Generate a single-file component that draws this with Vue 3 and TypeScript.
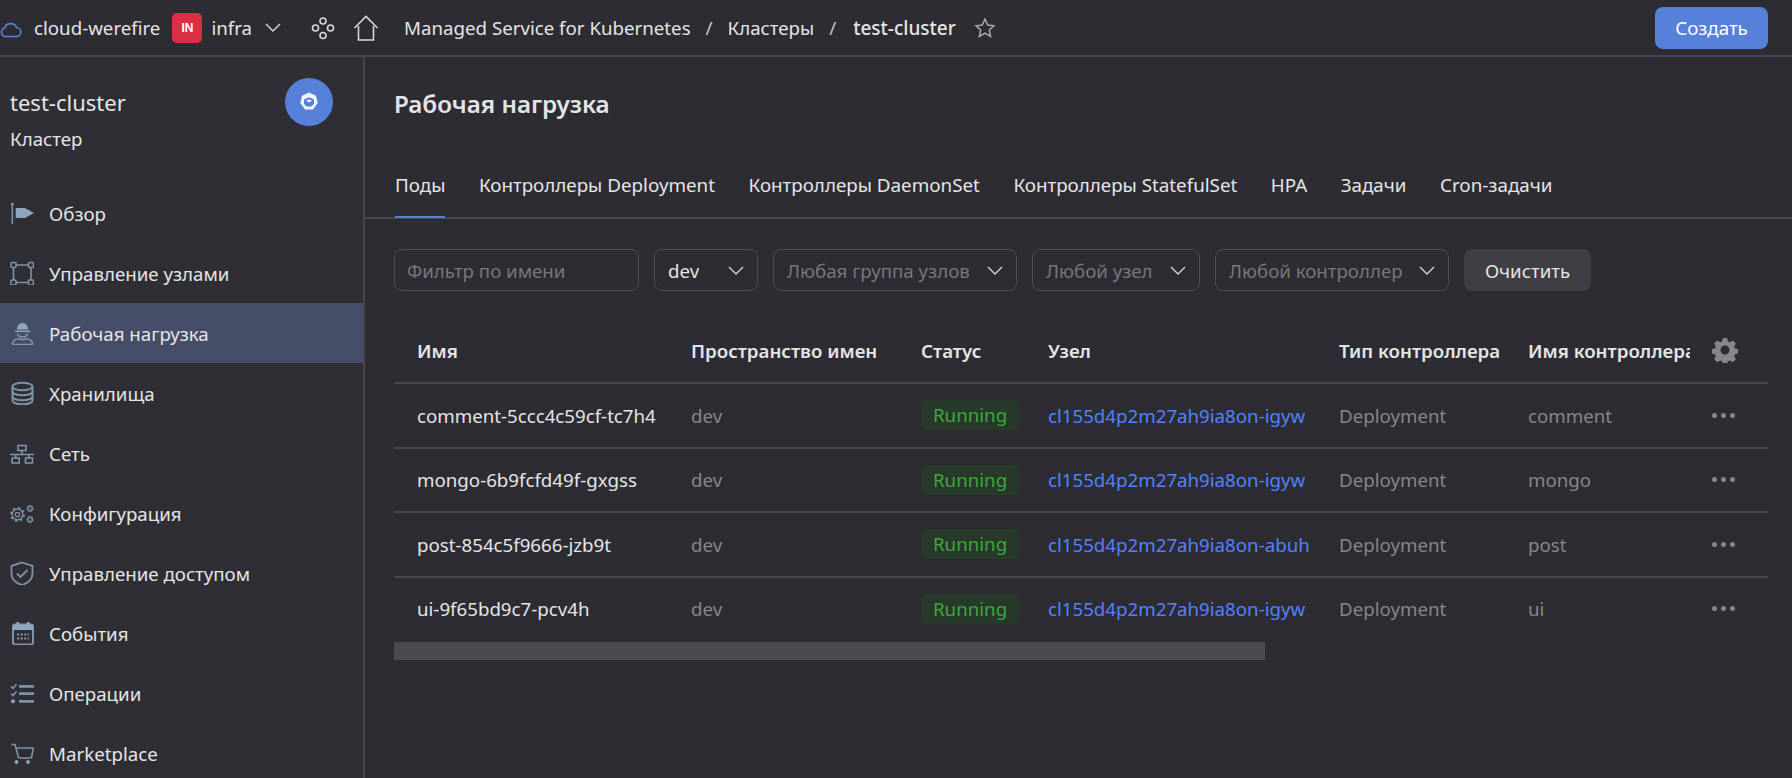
<script setup lang="ts">
interface NavItem {
  label: string
  icon: string
  active?: boolean
}

interface Pod {
  name: string
  node: string
  controller: string
}

const navItems: NavItem[] = [
  { label: 'Обзор', icon: 'flag' },
  { label: 'Управление узлами', icon: 'nodes' },
  { label: 'Рабочая нагрузка', icon: 'worker', active: true },
  { label: 'Хранилища', icon: 'db' },
  { label: 'Сеть', icon: 'net' },
  { label: 'Конфигурация', icon: 'gears' },
  { label: 'Управление доступом', icon: 'shield' },
  { label: 'События', icon: 'calendar' },
  { label: 'Операции', icon: 'list' },
  { label: 'Marketplace', icon: 'cart' },
]

const tabs = [
  'Поды',
  'Контроллеры Deployment',
  'Контроллеры DaemonSet',
  'Контроллеры StatefulSet',
  'HPA',
  'Задачи',
  'Cron-задачи',
]

const filters = [
  { label: 'dev', cls: 'f-dev', filled: true },
  { label: 'Любая группа узлов', cls: 'f-group', filled: false },
  { label: 'Любой узел', cls: 'f-node', filled: false },
  { label: 'Любой контроллер', cls: 'f-ctrl', filled: false },
]

const pods: Pod[] = [
  { name: 'comment-5ccc4c59cf-tc7h4', node: 'cl155d4p2m27ah9ia8on-igyw', controller: 'comment' },
  { name: 'mongo-6b9fcfd49f-gxgss', node: 'cl155d4p2m27ah9ia8on-igyw', controller: 'mongo' },
  { name: 'post-854c5f9666-jzb9t', node: 'cl155d4p2m27ah9ia8on-abuh', controller: 'post' },
  { name: 'ui-9f65bd9c7-pcv4h', node: 'cl155d4p2m27ah9ia8on-igyw', controller: 'ui' },
]
</script>

<template>
  <div class="app">
    <header class="topbar">
      <svg class="cloud" width="22" height="18" viewBox="0 0 22 18" fill="none" stroke="#5a82d8" stroke-width="1.6">
        <path d="M5 16.500h11a4.500 4.500 0 0 0 .6-9A6.500 6.500 0 0 0 4.500 8 4.400 4.400 0 0 0 5 16.500z" />
      </svg>
      <span class="cloud-name">cloud-werefire</span>
      <span class="folder-badge">IN</span>
      <span class="folder-name">infra</span>
      <svg class="chev top-chev" width="16" height="9" viewBox="0 0 16 9" fill="none" stroke="#d8d8da" stroke-width="1.4">
        <path d="M1 1l7 7 7-7" />
      </svg>
      <svg class="flow" width="24" height="24" viewBox="0 0 24 24" fill="none" stroke="#d8d8da" stroke-width="1.6">
        <circle cx="12" cy="5" r="3" />
        <circle cx="4.500" cy="12" r="3" />
        <circle cx="19.500" cy="12" r="3" />
        <circle cx="12" cy="19.500" r="3" />
      </svg>
      <svg class="home" width="26" height="26" viewBox="0 0 26 26" fill="none" stroke="#d8d8da" stroke-width="1.6">
        <path d="M1.500 13L13 1.500 24.500 13M5.500 11v14h15V11" />
      </svg>
      <nav class="crumbs">
        <span>Managed Service for Kubernetes</span>
        <span class="sep">/</span>
        <span>Кластеры</span>
        <span class="sep">/</span>
        <span class="current">test-cluster</span>
      </nav>
      <svg class="star" width="22" height="22" viewBox="0 0 22 22" fill="none" stroke="#a9a9ad" stroke-width="1.5">
        <path d="M11 2l2.700 6 6.300.7-4.700 4.300 1.300 6.500L11 16.200 5.400 19.500l1.300-6.500L2 8.700 8.300 8z" />
      </svg>
      <button class="create">Создать</button>
    </header>

    <div class="body">
      <aside class="sidebar">
        <div class="side-head">
          <div>
            <div class="side-title">test-cluster</div>
            <div class="side-sub">Кластер</div>
          </div>
          <span class="side-logo">
            <svg width="22" height="22" viewBox="0 0 22 22">
              <path fill="#f2f5fc" d="M11 1.500l7 3.200 1.700 7.300-4.700 6.400H7L2.300 12 4 4.700z" />
              <path fill="#5680d9" d="M11 6.200l5 2.300v4.600l-2.700 2.400H8.700L6 13.100V8.500z" />
              <path fill="#f2f5fc" d="M11 8.200l3 1.500-3 1.700-3-1.700z" />
            </svg>
          </span>
        </div>
        <ul class="nav">
          <li v-for="item in navItems" :key="item.label" class="nav-item" :class="{ active: item.active }">
            <svg class="nav-icon" width="24" height="24" viewBox="0 0 24 24" fill="none" stroke="#7f93a8" stroke-width="1.600">
              <template v-if="item.icon === 'flag'">
                <path d="M2.300 3v20" />
                <circle cx="2.300" cy="3" r="1.500" fill="#7f93a8" stroke="none" />
                <path fill="#8fa5bb" stroke="none" d="M5.700 7H15l9 5-9 5H5.700z" />
              </template>
              <template v-else-if="item.icon === 'nodes'">
                <rect x="1" y="1.500" width="5" height="5" rx="1" />
                <rect x="18.500" y="1.500" width="5" height="5" rx="1" />
                <rect x="1" y="19" width="5" height="5" rx="1" />
                <rect x="18.500" y="19" width="5" height="5" rx="1" />
                <path d="M6 4h12.500M6 21.500h12.500M3.500 6.500V19M21 6.500V19" />
              </template>
              <template v-else-if="item.icon === 'worker'">
                <path fill="#8fa5bb" stroke="none" d="M7 8.500c0-3.500 2-6.500 5.500-6.500S18 5 18 8.500zM5 9.500h15V11H5z" />
                <path d="M7.500 12.500c.5 2.500 2.500 3.500 5 3.500s4.500-1 5-3.500" />
                <path d="M2.700 23.500V22c0-2.500 3.500-4 5.800-4.200 2.500 1 5.500 1 8 0 2.300.2 5.800 1.700 5.800 4.200v1.500z" />
              </template>
              <template v-else-if="item.icon === 'db'">
                <g stroke-width="2">
                  <ellipse cx="12.500" cy="5.500" rx="10" ry="3.800" />
                  <path d="M2.500 5.500v14c0 2.200 4.500 3.800 10 3.800s10-1.600 10-3.800v-14" />
                  <path d="M2.500 10.500c0 2.200 4.500 3.800 10 3.800s10-1.600 10-3.800M2.500 15.500c0 2.200 4.500 3.800 10 3.800s10-1.600 10-3.800" />
                </g>
              </template>
              <template v-else-if="item.icon === 'net'">
                <rect x="8" y="4.500" width="8" height="5" />
                <rect x="2.200" y="17" width="7" height="5" />
                <rect x="15.500" y="17" width="7" height="5" />
                <path d="M12 9.500V13.500M0 13.500h24M5.700 13.500V17M19 13.500V17" />
              </template>
              <template v-else-if="item.icon === 'gears'">
                <circle cx="7.500" cy="13.500" r="5.300" stroke-width="1.300" />
                <circle cx="7.500" cy="13.500" r="6.600" stroke-width="1.600" stroke-dasharray="2.600 2.600" />
                <circle cx="7.500" cy="13.500" r="2.200" stroke-width="1.300" />
                <circle cx="20" cy="7.500" r="2.400" stroke-width="2.200" stroke-dasharray="1.500 .4" />
                <circle cx="20" cy="18.500" r="2.400" stroke-width="2.200" stroke-dasharray="1.500 .4" />
              </template>
              <template v-else-if="item.icon === 'shield'">
                <path d="M12 1.500l10.500 3.500v7.500c0 6-4 9.500-10.500 11.500C5.500 22 1.500 18.500 1.500 12.500V5z" stroke-width="1.800" />
                <path d="M7 12.500l3.500 3.500 7-7" stroke-width="1.800" />
              </template>
              <template v-else-if="item.icon === 'calendar'">
                <rect x="3" y="3.500" width="20" height="20" rx="2" stroke-width="2" />
                <path fill="#8fa5bb" stroke="none" d="M3 3.500h20V9H3zM6.500 1h2.600v4H6.500zM16.900 1h2.600v4h-2.600z" />
                <path stroke-width="2.200" stroke-dasharray="2.200 1.400" d="M7 13.500h12M7 17.500h12" />
              </template>
              <template v-else-if="item.icon === 'list'">
                <path stroke-width="2.800" d="M9 5.300h15M9 12.700h15M9 20.300h15" />
                <path stroke-width="1.600" d="M1 5.300l2 2 3.500-4M1 12.500l2 2 3.500-4" />
                <circle cx="3" cy="20.300" r="2" fill="#8fa5bb" stroke="none" />
              </template>
              <template v-else-if="item.icon === 'cart'">
                <path d="M1.500 3.500h3.500l3.500 13c4.500 1 8.500 1 13 0l2-9.500H6" />
                <circle cx="6.500" cy="21" r="1.900" fill="#8fa5bb" stroke="none" />
                <circle cx="18" cy="21" r="1.900" fill="#8fa5bb" stroke="none" />
              </template>
            </svg>
            <span>{{ item.label }}</span>
          </li>
        </ul>
      </aside>

      <main class="content">
        <h1>Рабочая нагрузка</h1>
        <div class="tabs">
          <span v-for="(tab, i) in tabs" :key="tab" class="tab" :class="{ selected: i === 0 }">{{ tab }}</span>
        </div>

        <div class="filters">
          <div class="field f-name">Фильтр по имени</div>
          <div v-for="f in filters" :key="f.label" class="field select" :class="[f.cls, { filled: f.filled }]">
            <span class="field-text">{{ f.label }}</span>
            <svg width="16" height="9" viewBox="0 0 16 9" fill="none" stroke="#d8d8da" stroke-width="1.300">
              <path d="M1 1l7 7 7-7" />
            </svg>
          </div>
          <button class="clear">Очистить</button>
        </div>

        <div class="table-wrap">
          <table>
            <colgroup>
              <col style="width: 274px" />
              <col style="width: 230px" />
              <col style="width: 127px" />
              <col style="width: 291px" />
              <col style="width: 189px" />
              <col style="width: 185px" />
              <col style="width: 78px" />
            </colgroup>
            <thead>
              <tr>
                <th>Имя</th>
                <th>Пространство имен</th>
                <th>Статус</th>
                <th>Узел</th>
                <th>Тип контроллера</th>
                <th class="clipped">Имя контроллера</th>
                <th class="gear-cell">
                  <svg width="26" height="26" viewBox="0 0 26 26" fill="#87868b">
                    <path fill-rule="evenodd" d="M10.800 1h4.400l.7 3.300 2 .9 2.900-1.800 3.100 3.100-1.800 2.900.9 2 3 .7v4.400l-3 .7-.9 2 1.800 2.900-3.100 3.100-2.900-1.800-2 .9-.7 3h-4.400l-.7-3-2-.9-2.900 1.800-3.100-3.100 1.800-2.900-.9-2-3-.7v-4.400l3-.7.9-2-1.800-2.900 3.100-3.100 2.900 1.800 2-.9zM13 8.500a4.500 4.500 0 1 0 0 9 4.500 4.500 0 0 0 0-9z" />
                  </svg>
                </th>
              </tr>
            </thead>
            <tbody>
              <tr v-for="pod in pods" :key="pod.name">
                <td>{{ pod.name }}</td>
                <td class="dim">dev</td>
                <td><span class="status">Running</span></td>
                <td class="link">{{ pod.node }}</td>
                <td class="dim">Deployment</td>
                <td class="dim">{{ pod.controller }}</td>
                <td class="dots-cell"><span class="dots"><i /><i /><i /></span></td>
              </tr>
            </tbody>
          </table>
          <div class="scrollbar" />
        </div>
      </main>
    </div>
  </div>
</template>

<style>
html, body { margin: 0; background: #2d2c33; }
</style>

<style scoped>
.app {
  height: 778px;
  overflow: hidden;
  background: #2d2c33;
  color: #e5e5e6;
  font-family: 'Noto Sans', 'Liberation Sans', sans-serif;
  font-size: 18.7px;
  display: flex;
  flex-direction: column;
}

.topbar {
  height: 55px;
  flex: none;
  display: flex;
  align-items: center;
  border-bottom: 2px solid #47464c;
  padding-right: 24px;
}
.cloud { margin-right: 12px; margin-top: 2px; }
.folder-badge {
  width: 30px;
  height: 30px;
  margin-left: 12px;
  border-radius: 5px;
  background: #db2f47;
  color: #fff;
  font-family: 'Liberation Sans', sans-serif;
  font-size: 12px;
  font-weight: 700;
  display: flex;
  align-items: center;
  justify-content: center;
}
.folder-name { margin-left: 9px; }
.top-chev { margin-left: 13px; }
.flow { margin-left: 30px; }
.home { margin-left: 18px; }
.crumbs { margin-left: 25px; display: flex; gap: 15px; }
.sep { color: #c4c4c7; }
.current { font-weight: 500; margin-left: 2px; font-size: 19px; }
.star { margin-left: 18px; }
.create {
  margin-left: auto;
  width: 113px;
  height: 42px;
  border: none;
  border-radius: 8px;
  background: #5680d9;
  color: #fff;
  font: inherit;
}

.body { flex: 1; display: flex; min-height: 0; }

.sidebar {
  width: 363px;
  flex: none;
  background: #2f2e35;
  border-right: 2px solid #47464c;
  overflow: hidden;
}
.side-head {
  height: 126px;
  padding: 21px 30px 0 10px;
  box-sizing: border-box;
  display: flex;
  justify-content: space-between;
  align-items: flex-start;
}
.side-title { font-size: 22px; margin-top: 10px; line-height: 28px; }
.side-sub { margin-top: 11px; line-height: 24px; }
.side-logo {
  width: 48px;
  height: 48px;
  border-radius: 50%;
  background: #5680d9;
  display: flex;
  align-items: center;
  justify-content: center;
}
.nav { list-style: none; margin: 0; padding: 0; }
.nav-item {
  height: 60px;
  display: flex;
  align-items: center;
  gap: 15px;
  padding-left: 10px;
}
.nav-item.active { background: #454d68; }
.nav-icon { flex: none; }

.content { flex: 1; min-width: 0; }
h1 {
  margin: 0;
  height: 72px;
  padding: 32px 0 0 29px;
  box-sizing: border-box;
  font-size: 24.200px;
  font-weight: 600;
  line-height: 30px;
}
.tabs {
  height: 90px;
  box-sizing: border-box;
  padding-left: 30px;
  display: flex;
  gap: 33.500px;
  border-bottom: 2px solid #47464c;
}
.tab {
  height: 89px;
  box-sizing: border-box;
  padding-top: 44px;
  line-height: 24px;
  font-size: 18.800px;
}
.tab.selected { border-bottom: 2px solid #5680d9; }

.filters {
  margin: 30px 0 0 29px;
  display: flex;
  gap: 15px;
  height: 42px;
}
.field {
  box-sizing: border-box;
  height: 42px;
  border: 1px solid #4c4b51;
  border-radius: 8px;
  padding: 0 13px;
  color: #77767c;
  display: flex;
  align-items: center;
  white-space: nowrap;
}
.select { justify-content: space-between; gap: 10px; }
.select svg { flex: none; }
.field-text { overflow: hidden; }
.f-name { width: 245px; padding-left: 12px; }
.f-dev { width: 104px; }
.f-group { width: 244px; }
.f-node { width: 168px; }
.f-ctrl { width: 234px; }
.filled { color: #e5e5e6; }
.clear {
  width: 127px;
  height: 42px;
  border: none;
  border-radius: 8px;
  background: #3f3e44;
  color: #e5e5e6;
  font: inherit;
}

.table-wrap { margin: 17px 24px 0 29px; }
table {
  width: 1374px;
  border-collapse: collapse;
  table-layout: fixed;
}
th {
  height: 64px;
  padding: 10px 0 0 23px;
  text-align: left;
  font-weight: 600;
  border-bottom: 2px solid #47464c;
  white-space: nowrap;
}
.clipped { overflow: hidden; padding-right: 0; }
td {
  height: 62.500px;
  padding: 0 0 0 23px;
  border-bottom: 2px solid #47464c;
  white-space: nowrap;
}
tbody tr:last-child td { border-bottom: none; }
.dim { color: #87868b; }
.link { color: #5282ff; }
.status {
  display: inline-block;
  height: 30px;
  line-height: 30px;
  padding: 0 12px;
  border-radius: 5px;
  background: #27392a;
  color: #3ba83b;
}
.gear-cell, .dots-cell { padding-left: 22px; }
.gear-cell svg { display: block; }
.dots { display: flex; gap: 4px; }
.dots i {
  width: 5px;
  height: 5px;
  border-radius: 50%;
  background: #87868b;
}
.scrollbar {
  width: 871px;
  height: 18px;
  margin-top: 2px;
  background: #4a4a4f;
}
</style>
